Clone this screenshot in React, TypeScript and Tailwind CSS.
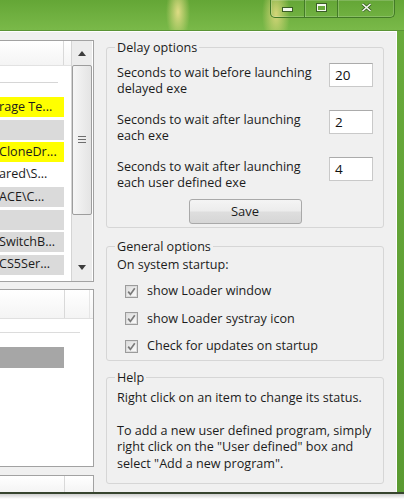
import React from "react";

function TriUp() {
  return (
    <svg width="8" height="5" viewBox="0 0 8 5">
      <path d="M0 5 L4 0 L8 5 Z" fill="#3c3c3c" />
    </svg>
  );
}

function TriDown() {
  return (
    <svg width="8" height="5" viewBox="0 0 8 5">
      <path d="M0 0 L8 0 L4 5 Z" fill="#3c3c3c" />
    </svg>
  );
}

function CheckRow({ label }: { label: string }) {
  return (
    <div className="flex items-center h-[16px] pl-[8px] gap-[9px]">
      <div className="w-[13px] h-[13px] border border-[#9b9b9b] bg-[#f4f4f4] flex items-center justify-center">
        <div className="w-[11px] h-[11px] border border-[#dcdcdc] bg-[linear-gradient(135deg,#dedede,#fafafa)] flex items-center justify-center">
          <svg width="9" height="9" viewBox="0 0 9 9">
            <path d="M1.2 4.6 L3.4 7.4 L7.8 1.2" fill="none" stroke="#7a7a7a" strokeWidth="1.7" />
          </svg>
        </div>
      </div>
      <span className="leading-[16px] whitespace-nowrap">{label}</span>
    </div>
  );
}

function DelayRow({ l1, l2, v, className }: { l1: string; l2: string; v: string; className: string }) {
  return (
    <div className={className}>
      <div className="flex justify-between items-start">
        <div className="mt-[2px] leading-[16px] whitespace-nowrap">
          {l1}
          <br />
          {l2}
        </div>
        <div className="w-[44px] h-[24px] bg-white border border-[#c9c9c9] border-t-[#ababab] flex items-center pl-[5px] text-[13.5px] text-[#111]">
          {v}
        </div>
      </div>
    </div>
  );
}

function ListRow({ text, color }: { text: string; color: string }) {
  return (
    <div className={"h-[20px] w-[64px] flex items-center overflow-hidden whitespace-nowrap " + color}>
      <span className="-ml-[1px]">{text}</span>
    </div>
  );
}

export default function App() {
  return (
    <div className="w-[404px] h-[499px] overflow-hidden bg-white flex flex-col font-['Open_Sans',sans-serif] text-[12.6px] text-[#1c1c1c]">
      <div className="h-[494px] flex flex-col bg-[linear-gradient(180deg,#6aab3c,#5a9a31)]">
        {/* Title bar */}
        <div className="h-[31px] flex border-b border-[#5b9436] bg-[radial-gradient(ellipse_12px_30px_at_178px_12px,rgba(235,225,140,0.9),rgba(235,225,140,0)),radial-gradient(ellipse_14px_32px_at_276px_14px,rgba(230,220,130,0.85),rgba(230,220,130,0)),linear-gradient(180deg,#64a636,#7ab949)]">
          <div className="ml-auto mr-[9px] h-[18px] flex border border-t-0 border-[#437a27] rounded-b-[5px] overflow-hidden shadow-[inset_0_0_0_1px_rgba(255,255,255,0.18)]">
            <div className="w-[33px] h-full flex items-center justify-center pt-[1px]">
              <svg width="11" height="5" viewBox="0 0 11 5">
                <rect x="0.5" y="0.5" width="10" height="4" fill="#f3f8ee" stroke="#3a5e26" strokeWidth="1" />
              </svg>
            </div>
            <div className="w-[33px] h-full flex items-center justify-center pb-[2px] border-l border-[#437a27] shadow-[inset_1px_0_0_rgba(255,255,255,0.2)]">
              <svg width="11" height="9" viewBox="0 0 11 9">
                <rect x="1" y="1" width="9" height="7" fill="none" stroke="#3a5e26" strokeWidth="2" />
                <rect x="1.5" y="1.5" width="8" height="6" fill="none" stroke="#f3f8ee" strokeWidth="1" />
                <rect x="1.5" y="1.5" width="8" height="1.5" fill="#f3f8ee" />
              </svg>
            </div>
            <div className="w-[57px] h-full flex items-center justify-center pb-[2px] border-l border-[#437a27] shadow-[inset_1px_0_0_rgba(255,255,255,0.2)]">
              <svg width="11" height="9" viewBox="0 0 11 9">
                <path d="M1.5 1 L9.5 8 M9.5 1 L1.5 8" stroke="#3a5e26" strokeWidth="3" />
                <path d="M1.5 1 L9.5 8 M9.5 1 L1.5 8" stroke="#f3f8ee" strokeWidth="1.6" />
              </svg>
            </div>
          </div>
        </div>

        {/* Body */}
        <div className="flex flex-1">
          <div className="w-[397px] h-[461px] bg-[#f0f0f0] border-t border-white border-r border-[#3f5234] flex">
            {/* Left column */}
            <div className="w-[94px] flex flex-col">
              {/* Box 1 */}
              <div className="mt-[8px] h-[243px] bg-white border border-l-0 border-[#a2a2a2] flex">
                <div className="w-[71px] flex flex-col">
                  <div className="h-[25px] flex bg-[linear-gradient(180deg,#ffffff,#f4f4f4)] border-b border-[#e2e2e2]">
                    <div className="w-[64px] border-r border-[#d9d9d9]" />
                  </div>
                  <div className="mt-[16px] h-[1px] w-[58px] bg-[#d6d6d6]" />
                  <div className="mt-[14px] flex flex-col gap-[2.5px]">
                    <ListRow text="rage Te..." color="bg-[#ffff00]" />
                    <ListRow text="" color="bg-[#dadada]" />
                    <ListRow text="CloneDr..." color="bg-[#ffff00]" />
                    <ListRow text="ared\S..." color="bg-white" />
                    <ListRow text="ACE\C..." color="bg-[#dadada]" />
                    <ListRow text="" color="bg-[#dadada]" />
                    <ListRow text="SwitchB..." color="bg-[#dadada]" />
                    <ListRow text="CS5Ser..." color="bg-[#dadada]" />
                  </div>
                </div>
                {/* Scrollbar */}
                <div className="w-[21px] mr-[1px] bg-[#ececec] border-l border-[#d4d4d4] flex flex-col">
                  <div className="h-[24px] flex items-center justify-center">
                    <TriUp />
                  </div>
                  <div className="h-[150px] border border-[#9d9d9d] rounded-[2px] bg-[linear-gradient(90deg,#f6f6f6,#e4e4e4)] flex items-center justify-center">
                    <div className="flex flex-col gap-[2px] -mt-[1px]">
                      <div className="w-[8px] h-[1px] bg-[#6d6d6d]" />
                      <div className="w-[8px] h-[1px] bg-[#6d6d6d]" />
                      <div className="w-[8px] h-[1px] bg-[#6d6d6d]" />
                    </div>
                  </div>
                  <div className="flex-1" />
                  <div className="h-[24px] flex items-center justify-center pb-[2px]">
                    <TriDown />
                  </div>
                </div>
              </div>

              {/* Box 2 */}
              <div className="mt-[7px] h-[179px] bg-white border border-l-0 border-[#a2a2a2] flex flex-col">
                <div className="h-[29px] flex bg-[linear-gradient(180deg,#ffffff,#f4f4f4)] border-b border-[#e0e0e0]">
                  <div className="w-[65px] border-r border-[#d9d9d9]" />
                  <div className="w-[25px] border-r border-[#e6e6e6]" />
                </div>
                <div className="mt-[13px] h-[1px] w-[80px] bg-[#dcdcdc]" />
                <div className="mt-[14px] h-[21px] w-[64px] bg-[#a6a6a6]" />
              </div>

              {/* Box 3 */}
              <div className="mt-[8px] flex-1 bg-white border border-l-0 border-b-0 border-[#a2a2a2] flex flex-col">
                <div className="h-[16px] flex bg-[linear-gradient(180deg,#ffffff,#f4f4f4)]">
                  <div className="w-[65px] border-r border-[#d9d9d9]" />
                </div>
              </div>
            </div>

            {/* Right column */}
            <div className="flex-1 flex flex-col pl-[12px]">
              <fieldset className="mt-[8px] w-[278px] border border-[#d6d6d6] rounded-[3px] px-[10px] pt-[8px] pb-[3px]">
                <legend className="-ml-[2px] px-[2px] leading-[15px]">Delay options</legend>
                <DelayRow className="" l1="Seconds to wait before launching" l2="delayed exe" v="20" />
                <DelayRow className="mt-[13px]" l1="Seconds to wait after launching" l2="each exe" v="2" />
                <DelayRow className="mt-[13px]" l1="Seconds to wait after launching" l2="each user defined exe" v="4" />
                <div className="mt-[8px] flex justify-center">
                  <div className="w-[113px] h-[25px] border border-[#a9a9a9] rounded-[3px] bg-[linear-gradient(180deg,#f4f4f4_0%,#ececec_48%,#dedede_52%,#d6d6d6_100%)] flex items-center justify-center text-[13px]">
                    Save
                  </div>
                </div>
              </fieldset>

              <fieldset className="mt-[11px] w-[278px] border border-[#d6d6d6] rounded-[3px] px-[10px] pt-[3px] pb-[6px]">
                <legend className="-ml-[2px] px-[2px] leading-[15px]">General options</legend>
                <div className="leading-[16px]">On system startup:</div>
                <div className="mt-[10px] flex flex-col gap-[11.5px]">
                  <CheckRow label="show Loader window" />
                  <CheckRow label="show Loader systray icon" />
                  <CheckRow label="Check for updates on startup" />
                </div>
              </fieldset>

              <fieldset className="mt-[9px] w-[278px] border border-[#d6d6d6] rounded-[3px] px-[10px] pt-[5px] pb-[11px]">
                <legend className="-ml-[2px] px-[2px] leading-[15px]">Help</legend>
                <div className="leading-[16.4px] whitespace-nowrap">
                  Right click on an item to change its status.
                  <br />
                  <br />
                  To add a new user defined program, simply
                  <br />
                  right click on the &quot;User defined&quot; box and
                  <br />
                  select &quot;Add a new program&quot;.
                </div>
              </fieldset>
            </div>
          </div>
          <div className="flex-1" />
        </div>
        <div className="h-[2px] bg-[#37452f]" />
      </div>
      <div className="flex-1 bg-[linear-gradient(180deg,#cfcfcf,#ffffff)]" />
    </div>
  );
}
